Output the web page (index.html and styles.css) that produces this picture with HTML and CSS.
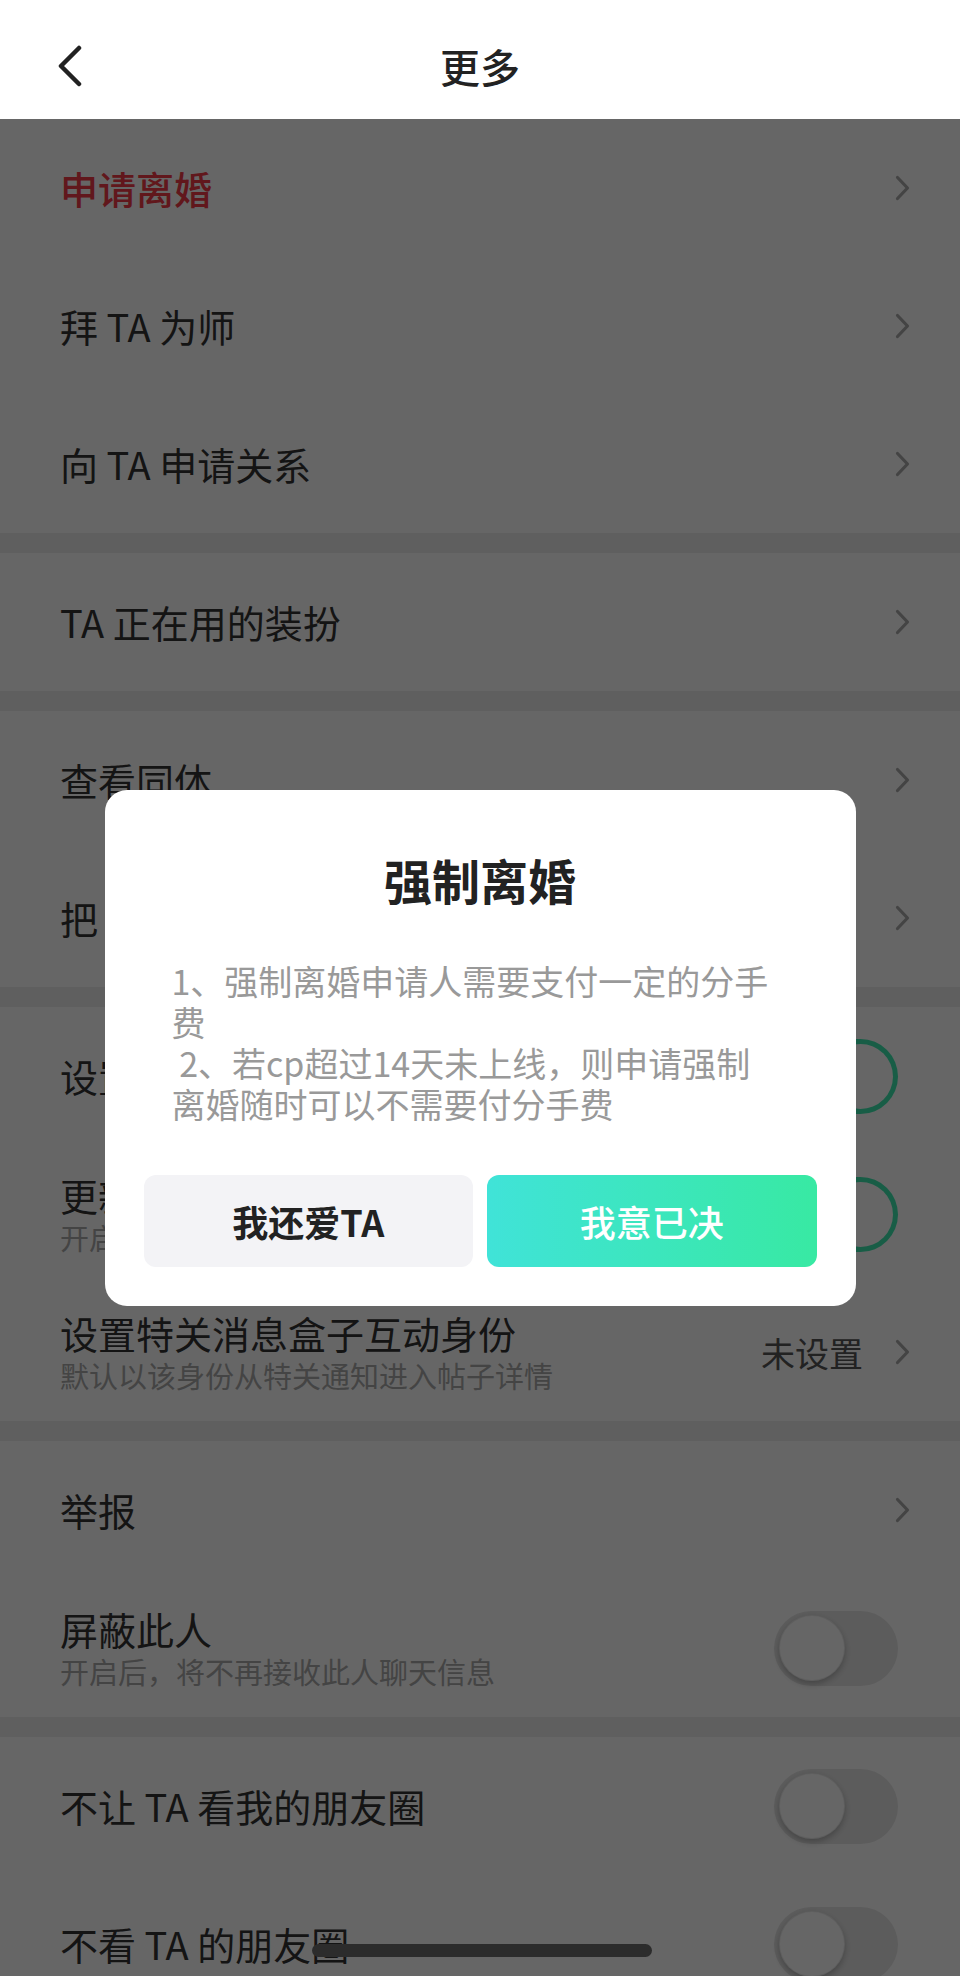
FILE: index.html
```html
<!DOCTYPE html>
<html lang="zh-CN">
<head>
  <meta charset="UTF-8">
  <title>更多</title>
  <meta name="viewport" content="width=device-width, initial-scale=1.0">
  <link rel="stylesheet" href="styles.css">
</head>
<body>
  <div class="header">
    <div class="header-side">
      <svg class="back" width="26" height="42" viewBox="0 0 26 42"><path d="M22 3 L4 21 L22 39" fill="none" stroke="#222" stroke-width="4.5" stroke-linecap="round" stroke-linejoin="round"/></svg>
    </div>
    <div class="header-title">更多</div>
    <div class="header-side"></div>
  </div>

  <div class="list">
    <div class="group">
      <div class="row">
        <div class="row-main"><div class="row-title danger">申请离婚</div></div>
        <svg class="chevron" width="15" height="26" viewBox="0 0 15 26"><path d="M2.5 2.5 L12.5 13 L2.5 23.5" fill="none" stroke="#aaa" stroke-width="3.2" stroke-linecap="round" stroke-linejoin="round"/></svg>
      </div>
      <div class="row">
        <div class="row-main"><div class="row-title">拜 TA 为师</div></div>
        <svg class="chevron" width="15" height="26" viewBox="0 0 15 26"><path d="M2.5 2.5 L12.5 13 L2.5 23.5" fill="none" stroke="#aaa" stroke-width="3.2" stroke-linecap="round" stroke-linejoin="round"/></svg>
      </div>
      <div class="row">
        <div class="row-main"><div class="row-title">向 TA 申请关系</div></div>
        <svg class="chevron" width="15" height="26" viewBox="0 0 15 26"><path d="M2.5 2.5 L12.5 13 L2.5 23.5" fill="none" stroke="#aaa" stroke-width="3.2" stroke-linecap="round" stroke-linejoin="round"/></svg>
      </div>
    </div>

    <div class="group">
      <div class="row">
        <div class="row-main"><div class="row-title">TA 正在用的装扮</div></div>
        <svg class="chevron" width="15" height="26" viewBox="0 0 15 26"><path d="M2.5 2.5 L12.5 13 L2.5 23.5" fill="none" stroke="#aaa" stroke-width="3.2" stroke-linecap="round" stroke-linejoin="round"/></svg>
      </div>
    </div>

    <div class="group">
      <div class="row">
        <div class="row-main"><div class="row-title">查看同体</div></div>
        <svg class="chevron" width="15" height="26" viewBox="0 0 15 26"><path d="M2.5 2.5 L12.5 13 L2.5 23.5" fill="none" stroke="#aaa" stroke-width="3.2" stroke-linecap="round" stroke-linejoin="round"/></svg>
      </div>
      <div class="row">
        <div class="row-main"><div class="row-title">把 TA 推荐给好友</div></div>
        <svg class="chevron" width="15" height="26" viewBox="0 0 15 26"><path d="M2.5 2.5 L12.5 13 L2.5 23.5" fill="none" stroke="#aaa" stroke-width="3.2" stroke-linecap="round" stroke-linejoin="round"/></svg>
      </div>
    </div>

    <div class="group">
      <div class="row">
        <div class="row-main"><div class="row-title">设置特别关心</div></div>
        <span class="switch on"><span class="knob"></span></span>
      </div>
      <div class="row">
        <div class="row-main">
          <div class="row-title">更新提醒</div>
          <div class="row-sub">开启后，TA 更新动态时会通知你</div>
        </div>
        <span class="switch on"><span class="knob"></span></span>
      </div>
      <div class="row">
        <div class="row-main">
          <div class="row-title">设置特关消息盒子互动身份</div>
          <div class="row-sub">默认以该身份从特关通知进入帖子详情</div>
        </div>
        <span class="row-value">未设置</span>
        <svg class="chevron" width="15" height="26" viewBox="0 0 15 26"><path d="M2.5 2.5 L12.5 13 L2.5 23.5" fill="none" stroke="#aaa" stroke-width="3.2" stroke-linecap="round" stroke-linejoin="round"/></svg>
      </div>
    </div>

    <div class="group">
      <div class="row">
        <div class="row-main"><div class="row-title">举报</div></div>
        <svg class="chevron" width="15" height="26" viewBox="0 0 15 26"><path d="M2.5 2.5 L12.5 13 L2.5 23.5" fill="none" stroke="#aaa" stroke-width="3.2" stroke-linecap="round" stroke-linejoin="round"/></svg>
      </div>
      <div class="row">
        <div class="row-main">
          <div class="row-title">屏蔽此人</div>
          <div class="row-sub">开启后，将不再接收此人聊天信息</div>
        </div>
        <span class="switch"><span class="knob"></span></span>
      </div>
    </div>

    <div class="group">
      <div class="row">
        <div class="row-main"><div class="row-title">不让 TA 看我的朋友圈</div></div>
        <span class="switch"><span class="knob"></span></span>
      </div>
      <div class="row">
        <div class="row-main"><div class="row-title">不看 TA 的朋友圈</div></div>
        <span class="switch"><span class="knob"></span></span>
      </div>
    </div>
  </div>

  <div class="mask">
    <div class="dialog">
      <div class="dialog-title">强制离婚</div>
      <div class="dialog-text">1、强制离婚申请人需要支付一定的分手费
 2、若cp超过14天未上线，则申请强制离婚随时可以不需要付分手费</div>
      <div class="dialog-actions">
        <button class="btn btn-cancel">我还爱TA</button>
        <button class="btn btn-confirm">我意已决</button>
      </div>
    </div>
  </div>

  <div class="home-bar"></div>
</body>
</html>
```

FILE: styles.css
```css
* {
  box-sizing: border-box;
}
html, body {
  margin: 0;
  padding: 0;
  height: 100%;
  overflow: hidden;
}
body {
  background: #eeeeee;
  font-family: "Noto Sans CJK SC", "Noto Sans", sans-serif;
  color: #333;
}

.header {
  height: 119px;
  padding-top: 12px;
  background: #fff;
  display: grid;
  grid-template-columns: 1fr auto 1fr;
  align-items: center;
}

.header-side {
  padding-left: 57px;
  display: flex;
  align-items: center;
}

.header-title {
  font-size: 40px;
  font-weight: 500;
  color: #222;
}

.group {
  background: #fff;
  margin-bottom: 20px;
}

.row {
  height: 138px;
  padding: 0 50px 0 60px;
  display: flex;
  align-items: center;
}

.row-main {
  flex: 1;
  min-width: 0;
  white-space: nowrap;
}

.row-title {
  font-size: 38px;
  line-height: 46px;
  color: #333;
}

.row-title.danger {
  color: #f23a46;
  font-weight: 500;
}

.row-sub {
  font-size: 29px;
  line-height: 38px;
  color: #aaa;
}

.row-value {
  font-size: 34px;
  color: #555;
  margin-right: 32px;
}

.chevron {
  display: block;
  flex-shrink: 0;
}

.switch {
  width: 124px;
  height: 75px;
  margin-right: 12px;
  border-radius: 38px;
  background: #e6e6e6;
  padding: 5px;
  display: flex;
  align-items: center;
  flex-shrink: 0;
}

.switch .knob {
  width: 66px;
  height: 66px;
  border-radius: 50%;
  background: #fff;
  border: 1px solid rgba(0, 0, 0, 0.08);
  box-shadow: 0 3px 6px rgba(0, 0, 0, 0.25);
}

.switch.on {
  background: #3ee8b0;
  justify-content: flex-end;
}

.switch.on .knob {
  width: 65px;
  height: 65px;
  border: none;
  box-shadow: none;
}

.mask {
  position: fixed;
  top: 119px;
  left: 0;
  right: 0;
  bottom: 0;
  background: rgba(0, 0, 0, 0.6);
  display: flex;
  justify-content: center;
  align-items: center;
}

.dialog {
  width: 751px;
  background: #fff;
  border-radius: 22px;
  padding: 59px 39px 39px;
}

.dialog-title {
  font-size: 48px;
  line-height: 60px;
  font-weight: 700;
  color: #222;
  text-align: center;
}

.dialog-text {
  margin-top: 51px;
  padding: 0 41px 0 28px;
  font-size: 34px;
  line-height: 41px;
  color: #999;
  white-space: pre-wrap;
}

.dialog-actions {
  margin-top: 51px;
  display: flex;
  gap: 14px;
}

.btn {
  flex: 1;
  height: 92px;
  border: none;
  border-radius: 12px;
  font-family: inherit;
  font-size: 36px;
  cursor: pointer;
}

.btn-cancel {
  background: #f3f3f6;
  color: #222;
  font-weight: 700;
}

.btn-confirm {
  background: linear-gradient(90deg, #40e3d8, #38e9a3);
  color: #fff;
  font-weight: 500;
}

.home-bar {
  position: fixed;
  left: 312px;
  bottom: 19px;
  width: 340px;
  height: 13px;
  border-radius: 7px;
  background: #2c2c2c;
}
```
